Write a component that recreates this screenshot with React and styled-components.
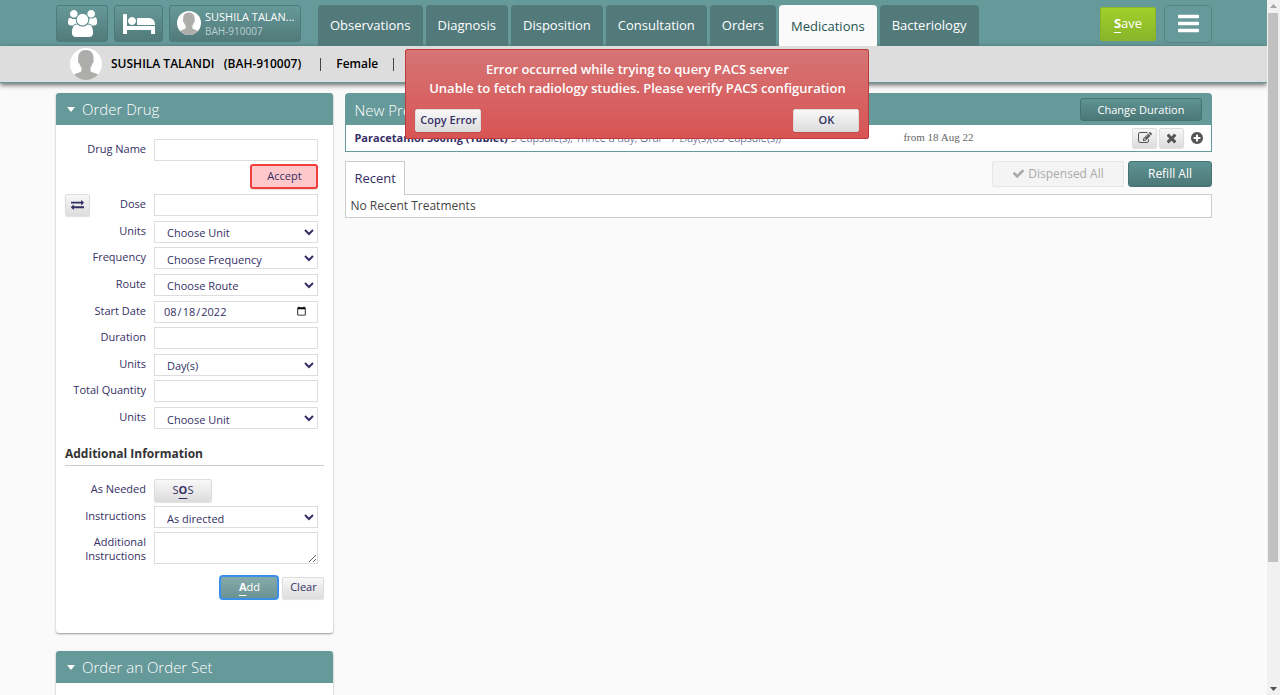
import React from "react";
import styled, { createGlobalStyle, css } from "styled-components";

const teal = "#669999";
const ink = "#353064";

const GlobalStyle = createGlobalStyle`
  *, *::before, *::after { box-sizing: border-box; }
  body {
    margin: 0;
    background: #fafafa;
    color: ${ink};
    font: 11px/16px "Open Sans", sans-serif;
  }
  button, input, select, textarea { font: inherit; color: inherit; margin: 0; }
  h1, h2, h3, p { margin: 0; font: inherit; }
`;

const Window = styled.div`
  display: flex;
  height: 100vh;
  overflow: hidden;
`;

const Page = styled.div`
  flex: 1;
  min-width: 0;
  position: relative;
  overflow: hidden;
`;

const ScrollTrack = styled.div`
  width: 13px;
  display: flex;
  flex-direction: column;
  align-items: center;
  background: #f1f1f1;
`;

const ScrollArrow = styled.svg`
  width: 13px;
  height: 13px;
  fill: ${(p) => (p.$dim ? "#a3a3a3" : "#505050")};
`;

const ScrollRun = styled.div`
  flex: 1;
  width: 100%;
  padding: 0 2px 0 1px;
`;

const ScrollThumb = styled.div`
  height: 82%;
  background: #c1c1c1;
`;

const Icon = styled.svg`
  display: block;
  flex: none;
  width: ${(p) => p.$w}px;
  height: ${(p) => p.$h}px;
  fill: currentColor;
`;

const Header = styled.header`
  display: flex;
  align-items: flex-start;
  height: 46px;
  padding: 5px 55px 0 56px;
  background: ${teal};
`;

const HeaderButton = styled.button`
  display: flex;
  align-items: center;
  justify-content: center;
  width: ${(p) => p.$w}px;
  height: 37px;
  margin-right: 6px;
  padding: 0;
  border: 1px solid #4a7c7c;
  border-radius: 3px;
  background: linear-gradient(#669999, #527a7a);
  color: #fff;
`;

const PatientButton = styled(HeaderButton)`
  justify-content: flex-start;
  align-items: flex-start;
  gap: 4px;
  padding: 5px 4px 5px 7px;
  text-align: left;
  line-height: 12px;
`;

const PatientLines = styled.span`
  display: flex;
  flex-direction: column;
  gap: 2px;
  min-width: 0;
`;

const ShortName = styled.span`
  font-size: 11px;
  white-space: nowrap;
`;

const ShortId = styled.span`
  font-size: 10px;
  color: #b9d0d0;
`;

const Tabs = styled.nav`
  display: flex;
  gap: 3px;
  margin-left: 11px;
  flex: 1;
`;

const Tab = styled.a`
  height: 41px;
  padding: 11px 12px 0;
  border-radius: 4px 4px 0 0;
  background: #527a7a;
  color: #fff;
  font-size: 13px;
  line-height: 18px;
  text-decoration: none;
  white-space: nowrap;
  ${(p) =>
    p.$active &&
    css`
      padding-top: 12px;
      background: #fafafa;
      color: #1f5454;
    `}
`;

const SaveButton = styled.button`
  width: 56px;
  height: 34px;
  margin: 2px 8px 0 0;
  padding: 0 0 2px;
  border: 1px solid #88b52a;
  border-radius: 2px;
  background: linear-gradient(#a1cf2b, #88b52a);
  color: #fff;
  font-size: 13px;
`;

const MenuButton = styled.button`
  display: flex;
  align-items: center;
  justify-content: center;
  width: 48px;
  height: 38px;
  padding: 0 0 2px;
  border: 1px solid #558585;
  border-radius: 4px;
  background: transparent;
  color: #fff;
`;

const AccessKey = styled.u`
  font-weight: 700;
  text-underline-offset: 4px;
  text-decoration-thickness: 1px;
`;

const PatientBar = styled.section`
  display: flex;
  align-items: center;
  height: 37px;
  padding-left: 70px;
  background: #ddd;
  border-bottom: 1px solid ${teal};
  box-shadow: 0 2px 5px rgba(0, 0, 0, 0.6);
  color: #000;
  font-size: 12px;
  font-weight: 600;
`;

const PatientName = styled.h1`
  margin: 0 19px 0 9px;
  white-space: pre;
`;

const Divider = styled.span`
  width: 1px;
  height: 13px;
  background: #444;
`;

const Gender = styled.span`
  margin: 0 15px;
`;

const Columns = styled.main`
  display: flex;
  align-items: flex-start;
  gap: 12px;
  padding: 10px 55px 0 56px;
`;

const Side = styled.aside`
  width: 24%;
  display: flex;
  flex-direction: column;
  gap: 18px;
`;

const Content = styled.div`
  flex: 1;
  min-width: 0;
`;

const Panel = styled.section`
  border-radius: 3px;
  background: #fff;
  box-shadow: 0 1px 2px rgba(0, 0, 0, 0.4);
`;

const PanelTitle = styled.h2`
  display: flex;
  align-items: center;
  gap: 7px;
  height: 32px;
  padding: 0 11px;
  border-radius: 3px 3px 0 0;
  background: ${teal};
  color: #fff;
  font-size: 15px;
  font-weight: 300;
`;

const Form = styled.form`
  padding: 14px 9px 33px;
`;

const FieldRow = styled.div`
  display: grid;
  grid-template-columns: 81px minmax(0, 1fr);
  column-gap: 8px;
  padding-right: 6px;
`;

const FieldGroup = styled.div`
  display: grid;
  align-content: space-between;
  min-height: 235px;
`;

const LabelCell = styled.div`
  display: flex;
  justify-content: space-between;
`;

const Label = styled.label`
  flex: 1;
  padding-top: 3px;
  text-align: right;
  line-height: 14px;
`;

const fieldBox = css`
  width: 100%;
  height: 22px;
  border: 1px solid #ddd;
  border-radius: 0;
  background: #fff;
`;

const TextBox = styled.input`
  ${fieldBox}
  padding: 0 8px;
`;

const SelectBox = styled.select`
  ${fieldBox}
  padding: 2px 0 0 8px;
`;

const TextArea = styled.textarea`
  ${fieldBox}
  display: block;
  height: 32px;
`;

const AcceptRow = styled.div`
  display: flex;
  justify-content: flex-end;
  padding: 3px 6px 5px 0;
`;

const GreyButton = styled.button`
  display: flex;
  align-items: center;
  justify-content: center;
  width: ${(p) => p.$w}px;
  height: ${(p) => p.$h || 22}px;
  padding: 0 0 1px;
  border: 1px solid #ddd;
  border-radius: 2px;
  background: linear-gradient(#f8f8f8, #ddd);
  box-shadow: 0 1px 1px rgba(0, 0, 0, 0.12);
  font-weight: ${(p) => (p.$strong ? 600 : 400)};
`;

const AcceptButton = styled(GreyButton)`
  border: 2px solid #f33e3e;
  border-radius: 3px;
  background: #ffc9cc;
`;

const Subheading = styled.h3`
  margin: 17px 0 13px;
  padding-bottom: 3px;
  border-bottom: 1px solid #ccc;
  color: #333;
  font-size: 12px;
  font-weight: 700;
`;

const ExtraFields = styled.div`
  display: grid;
  row-gap: 4px;
`;

const Actions = styled.div`
  display: flex;
  justify-content: flex-end;
  align-items: center;
  gap: 3px;
  margin-top: 11px;
`;

const AddButton = styled.button`
  width: 60px;
  height: 25px;
  padding: 0 0 2px;
  border: 2px solid #3b8fea;
  border-radius: 4px;
  background: linear-gradient(#86aaaa, #6b9393);
  color: #fff;
`;

const SetBody = styled.div`
  height: 80px;
`;

const ContentTitle = styled(PanelTitle)`
  justify-content: space-between;
  padding: 1px 10px 0 9px;
  border-radius: 4px 4px 0 0;
`;

const TealButton = styled.button`
  width: ${(p) => p.$w}px;
  height: ${(p) => p.$h}px;
  padding: 0;
  border: 1px solid #437373;
  border-radius: 3px;
  background: linear-gradient(#5f9393, #4c7777);
  color: #fff;
  font-size: ${(p) => p.$size}px;
  font-weight: 400;
`;

const DrugRow = styled.div`
  display: flex;
  align-items: center;
  height: 27px;
  padding: 0 7px 0 8px;
  border: 1px solid ${teal};
  border-top: 0;
  background: #fff;
`;

const DrugText = styled.p`
  width: 549px;
  font-weight: 300;

  strong { font-weight: 700; }
`;

const DrugDate = styled.span`
  flex: 1;
  padding-bottom: 2px;
  color: #666;
  font: 11px/16px "Liberation Serif", serif;
`;

const DrugActions = styled.div`
  display: flex;
  align-items: center;
  gap: 2px;
  color: #555;
`;

const PlusButton = styled.button`
  margin-left: 4px;
  padding: 0;
  border: 0;
  background: none;
`;

const RecentBar = styled.div`
  display: flex;
  justify-content: flex-end;
  gap: 4px;
  height: 33px;
  margin-top: 9px;
`;

const RecentTab = styled.button`
  position: relative;
  margin: 0 auto -1px 0;
  padding: 0 8px 2px;
  border: 1px solid #ccc;
  border-bottom: 0;
  background: #fff;
  font-size: 13px;
`;

const DispensedButton = styled.button`
  display: flex;
  align-items: center;
  justify-content: center;
  gap: 3px;
  width: 132px;
  height: 26px;
  padding: 0 0 1px;
  border: 1px solid #e6e6e6;
  border-radius: 2px;
  background: #f4f4f4;
  color: #aaa;
  font-size: 12px;
`;

const Empty = styled.p`
  padding: 3px 4px;
  border: 1px solid #ccc;
  background: #fff;
  color: #444;
  font-size: 12px;
`;

const ErrorBox = styled.div`
  position: absolute;
  top: 49px;
  left: 32%;
  z-index: 2;
  width: 464px;
  padding: 10px 9px 6px;
  border: 1px solid #b93b3b;
  border-radius: 2px;
  background: linear-gradient(#d67474, #d85454);
`;

const ErrorText = styled.p`
  color: #fff;
  font-size: 13px;
  font-weight: 600;
  line-height: 19px;
  text-align: center;
`;

const ErrorActions = styled.div`
  display: flex;
  justify-content: space-between;
  margin-top: 11px;
  color: ${ink};
`;

const paths = {
  users: [1920, "M593 896q-162 5-265 128h-134q-82 0-138-40.500t-56-118.500q0-353 124-353 6 0 43.500 21t97.500 42.500 119 21.500q67 0 133-23-5 37-5 66 0 159 93 287zm1071 637q0 120-73 189.500t-194 69.500h-874q-121 0-194-69.500t-73-189.500q0-53 3.500-103.500t14-109 26.500-108.500 43-97.500 62-81 85.500-53.500 111.500-20q10 0 43 21.500t73 48 107 48 135 21.500 135-21.500 107-48 73-48 43-21.500q61 0 111.500 20t85.500 53.500 62 81 43 97.500 26.500 108.500 14 109 3.500 103.500zm-1024-1277q0 106-75 181t-181 75-181-75-75-181 75-181 181-75 181 75 75 181zm704 384q0 159-112.500 271.500t-271.500 112.500-271.500-112.500-112.500-271.500 112.500-271.500 271.500-112.500 271.500 112.500 112.500 271.500zm576 225q0 78-56 118.500t-138 40.500h-134q-103-123-265-128 93-128 93-287 0-29-5-66 66 23 133 23 59 0 119-21.500t97.500-42.500 43.500-21q124 0 124 353zm-128-609q0 106-75 181t-181 75-181-75-75-181 75-181 181-75 181 75 75 181z"],
  bed: [2048, "M256 1024h1728q26 0 45 19t19 45v448h-256v-256h-1536v256h-256v-1216q0-26 19-45t45-19h128q26 0 45 19t19 45v704zm576-320q0-106-75-181t-181-75-181 75-75 181 75 181 181 75 181-75 75-181zm1216 256v-64q0-159-112.500-271.500t-271.500-112.500h-704q-26 0-45 19t-19 45v384h1152z"],
  bars: [1536, "M1536 1344v128q0 26-19 45t-45 19h-1408q-26 0-45-19t-19-45v-128q0-26 19-45t45-19h1408q26 0 45 19t19 45zm0-512v128q0 26-19 45t-45 19h-1408q-26 0-45-19t-19-45v-128q0-26 19-45t45-19h1408q26 0 45 19t19 45zm0-512v128q0 26-19 45t-45 19h-1408q-26 0-45-19t-19-45v-128q0-26 19-45t45-19h1408q26 0 45 19t19 45z"],
  times: [1408, "M1298 1322q0 40-28 68l-136 136q-28 28-68 28t-68-28l-294-294-294 294q-28 28-68 28t-68-28l-136-136q-28-28-28-68t28-68l294-294-294-294q-28-28-28-68t28-68l136-136q28-28 68-28t68 28l294 294 294-294q28-28 68-28t68 28l136 136q28 28 28 68t-28 68l-294 294 294 294q28 28 28 68z"],
  check: [1792, "M1671 566q0 40-28 68l-724 724-136 136q-28 28-68 28t-68-28l-136-136-362-362q-28-28-28-68t28-68l136-136q28-28 68-28t68 28l294 295 656-657q28-28 68-28t68 28l136 136q28 28 28 68z"],
  plus: [1792, "M1344 960v-128q0-26-19-45t-45-19h-256v-256q0-26-19-45t-45-19h-128q-26 0-45 19t-19 45v256h-256q-26 0-45 19t-19 45v128q0 26 19 45t45 19h256v256q0 26 19 45t45 19h128q26 0 45-19t19-45v-256h256q26 0 45-19t19-45zm320-64q0 209-103 385.500t-279.500 279.500-385.500 103-385.500-103-279.500-279.500-103-385.500 103-385.500 279.500-279.500 385.500-103 385.500 103 279.500 279.500 103 385.500z"],
  exchange: [1792, "M1792 1184v192q0 13-9.500 22.500t-22.500 9.500h-1376v192q0 13-9.500 22.500t-22.500 9.500q-12 0-24-10l-319-320q-9-9-9-22 0-14 9-23l320-320q9-9 23-9 13 0 22.500 9.500t9.500 22.500v192h1376q13 0 22.500 9.500t9.500 22.500zm0-544q0 14-9 23l-320 320q-9 9-23 9-13 0-22.500-9.500t-9.500-22.500v-192h-1376q-13 0-22.500-9.500t-9.500-22.500v-192q0-13 9.500-22.500t22.500-9.500h1376v-192q0-14 9-23t23-9q12 0 24 10l319 319q9 9 9 23z"],
  edit: [1792, "M888 1184l116-116-152-152-116 116v56h96v96h56zm440-720q-16-16-33 1l-350 350q-17 17-1 33t33-1l350-350q17-17 1-33zm80 594v190q0 119-84.500 203.500t-203.500 84.500h-832q-119 0-203.500-84.500t-84.500-203.500v-832q0-119 84.500-203.500t203.500-84.500h832q63 0 117 25 15 7 18 23 3 17-9 29l-49 49q-14 14-32 8-23-6-45-6h-832q-66 0-113 47t-47 113v832q0 66 47 113t113 47h832q66 0 113-47t47-113v-126q0-13 9-22l64-64q15-15 35-7t20 29zm-96-738l288 288-672 672h-288v-288zm444 132l-92 92-288-288 92-92q28-28 68-28t68 28l152 152q28 28 28 68t-28 68z"],
};

function Glyph({ name, w, h }) {
  const [width, d] = paths[name];
  return (
    <Icon $w={w} $h={h} viewBox={`0 0 ${width} 1792`} aria-hidden="true">
      <path d={d} />
    </Icon>
  );
}

function Avatar({ size, id }) {
  return (
    <Icon $w={size} $h={size} viewBox="0 0 32 32" aria-hidden="true">
      <clipPath id={id}>
        <circle cx="16" cy="16" r="16" />
      </clipPath>
      <circle cx="16" cy="16" r="16" fill="#fff" />
      <path
        clipPath={`url(#${id})`}
        fill="#adadab"
        d="M16 2c5 0 7.500 3 7.500 8 0 2 .5 3 0 4-.3 1-1 1-1.200 2-.4 2-1.800 3-1.800 4v3c1 2 8 2 10 6v5H2v-5c2-4 8-4 9.500-6v-3c0-1-1.500-2-2-4-.2-1-1-1-1.300-2-.4-1 0-2 0-4 0-5 2.500-8 7.800-8z"
      />
    </Icon>
  );
}

function Caret() {
  return (
    <Icon $w={8} $h={5} viewBox="0 0 8 5" aria-hidden="true">
      <path d="M0 0h8L4 5z" />
    </Icon>
  );
}

function Field({ id, label, before, children }) {
  return (
    <FieldRow>
      <LabelCell>
        {before}
        <Label htmlFor={id}>{label}</Label>
      </LabelCell>
      {children}
    </FieldRow>
  );
}

function SelectField({ id, label, value }) {
  return (
    <Field id={id} label={label}>
      <SelectBox id={id}>
        <option>{value}</option>
      </SelectBox>
    </Field>
  );
}

const tabs = ["Observations", "Diagnosis", "Disposition", "Consultation", "Orders", "Medications", "Bacteriology"];

export default function App() {
  return (
    <Window>
      <GlobalStyle />
      <Page>
        <Header>
          <HeaderButton $w={52} aria-label="Patients">
            <Glyph name="users" w={29} h={27} />
          </HeaderButton>
          <HeaderButton $w={49} aria-label="Inpatients">
            <Glyph name="bed" w={32} h={28} />
          </HeaderButton>
          <PatientButton $w={132}>
            <Avatar size={24} id="avatar-small" />
            <PatientLines>
              <ShortName>SUSHILA TALAN...</ShortName>
              <ShortId>BAH-910007</ShortId>
            </PatientLines>
          </PatientButton>
          <Tabs>
            {tabs.map((name) => (
              <Tab key={name} href="#" $active={name === "Medications"}>
                {name}
              </Tab>
            ))}
          </Tabs>
          <SaveButton>
            <AccessKey>S</AccessKey>ave
          </SaveButton>
          <MenuButton aria-label="Menu">
            <Glyph name="bars" w={21} h={25} />
          </MenuButton>
        </Header>

        <PatientBar>
          <Avatar size={32} id="avatar-large" />
          <PatientName>{"SUSHILA TALANDI   (BAH-910007)"}</PatientName>
          <Divider />
          <Gender>Female</Gender>
          <Divider />
        </PatientBar>

        <Columns>
          <Side>
            <Panel>
              <PanelTitle>
                <Caret />
                Order Drug
              </PanelTitle>
              <Form onSubmit={(e) => e.preventDefault()}>
                <Field id="drug" label="Drug Name">
                  <TextBox id="drug" />
                </Field>
                <AcceptRow>
                  <AcceptButton type="button" $w={68} $h={25}>
                    Accept
                  </AcceptButton>
                </AcceptRow>
                <FieldGroup>
                  <Field
                    id="dose"
                    label="Dose"
                    before={
                      <GreyButton type="button" $w={25} aria-label="Switch dose type">
                        <Glyph name="exchange" w={13} h={13} />
                      </GreyButton>
                    }
                  >
                    <TextBox id="dose" />
                  </Field>
                  <SelectField id="dose-unit" label="Units" value="Choose Unit" />
                  <SelectField id="frequency" label="Frequency" value="Choose Frequency" />
                  <SelectField id="route" label="Route" value="Choose Route" />
                  <Field id="start" label="Start Date">
                    <TextBox id="start" type="date" defaultValue="2022-08-18" />
                  </Field>
                  <Field id="duration" label="Duration">
                    <TextBox id="duration" />
                  </Field>
                  <SelectField id="duration-unit" label="Units" value="Day(s)" />
                  <Field id="quantity" label="Total Quantity">
                    <TextBox id="quantity" />
                  </Field>
                  <SelectField id="quantity-unit" label="Units" value="Choose Unit" />
                </FieldGroup>
                <Subheading>Additional Information</Subheading>
                <ExtraFields>
                  <Field id="sos" label="As Needed">
                    <GreyButton id="sos" type="button" $w={58} $h={23}>
                      <span>
                        S<AccessKey>O</AccessKey>S
                      </span>
                    </GreyButton>
                  </Field>
                  <SelectField id="instructions" label="Instructions" value="As directed" />
                  <Field id="more" label="Additional Instructions">
                    <TextArea id="more" />
                  </Field>
                </ExtraFields>
                <Actions>
                  <AddButton>
                    <AccessKey>A</AccessKey>dd
                  </AddButton>
                  <GreyButton type="button" $w={42}>
                    Clear
                  </GreyButton>
                </Actions>
              </Form>
            </Panel>
            <Panel>
              <PanelTitle>
                <Caret />
                Order an Order Set
              </PanelTitle>
              <SetBody />
            </Panel>
          </Side>

          <Content>
            <ContentTitle>
              New Prescription
              <TealButton $w={122} $h={23} $size={11}>
                Change Duration
              </TealButton>
            </ContentTitle>
            <DrugRow>
              <DrugText>
                <strong>Paracetamol 500mg (Tablet)</strong> 3 Capsule(s), Thrice a day, Oral - 7 Day(s)(63 Capsule(s))
              </DrugText>
              <DrugDate>from 18 Aug 22</DrugDate>
              <DrugActions>
                <GreyButton $w={25} $h={20} aria-label="Edit">
                  <Glyph name="edit" w={14} h={14} />
                </GreyButton>
                <GreyButton $w={25} $h={20} aria-label="Remove">
                  <Glyph name="times" w={11} h={14} />
                </GreyButton>
                <PlusButton aria-label="Add more">
                  <Glyph name="plus" w={14} h={14} />
                </PlusButton>
              </DrugActions>
            </DrugRow>
            <RecentBar>
              <RecentTab>Recent</RecentTab>
              <DispensedButton disabled>
                <Glyph name="check" w={13} h={13} />
                Dispensed All
              </DispensedButton>
              <TealButton $w={84} $h={26} $size={12}>
                Refill All
              </TealButton>
            </RecentBar>
            <Empty>No Recent Treatments</Empty>
          </Content>
        </Columns>

        <ErrorBox role="alert">
          <ErrorText>Error occurred while trying to query PACS server</ErrorText>
          <ErrorText>Unable to fetch radiology studies. Please verify PACS configuration</ErrorText>
          <ErrorActions>
            <GreyButton $w={66} $h={23} $strong>
              Copy Error
            </GreyButton>
            <GreyButton $w={66} $h={23} $strong>
              OK
            </GreyButton>
          </ErrorActions>
        </ErrorBox>
      </Page>

      <ScrollTrack aria-hidden="true">
        <ScrollArrow $dim viewBox="0 0 13 13">
          <path d="M3 8h7L6.500 4z" />
        </ScrollArrow>
        <ScrollRun>
          <ScrollThumb />
        </ScrollRun>
        <ScrollArrow viewBox="0 0 13 13">
          <path d="M3 5h7L6.500 9z" />
        </ScrollArrow>
      </ScrollTrack>
    </Window>
  );
}
